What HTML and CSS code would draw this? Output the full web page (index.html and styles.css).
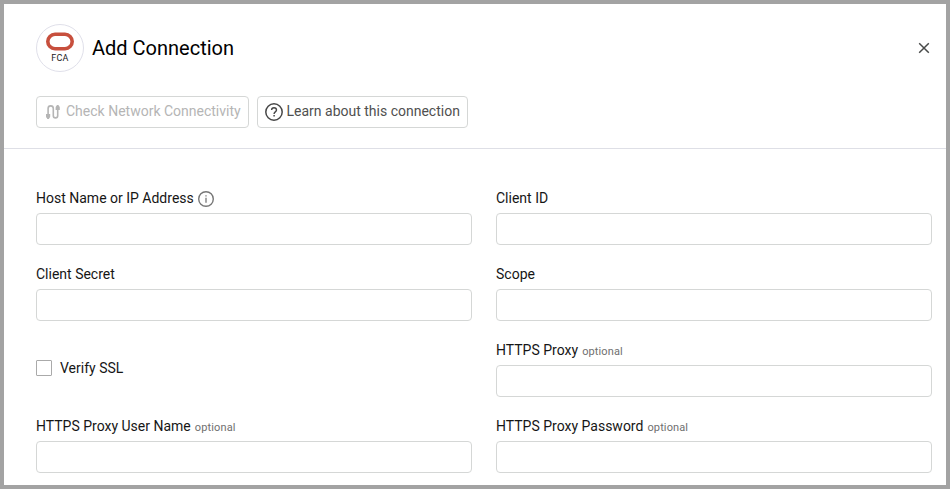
FILE: index.html
```html
<!DOCTYPE html>
<html lang="en">
<head>
<meta charset="utf-8">
<title>Add Connection</title>
<link rel="stylesheet" href="styles.css">
</head>
<body>
<main class="dialog">
  <header class="header">
    <div class="title-row">
      <div class="logo">
        <svg width="28" height="19" viewBox="0 0 28 19"><rect x="1.8" y="2.3" width="24.4" height="14.4" rx="7.2" fill="none" stroke="#c74f3d" stroke-width="3.6"/></svg>
        <span class="logo-text">FCA</span>
      </div>
      <h1 class="title">Add Connection</h1>
      <button class="close" aria-label="Close">
        <svg width="12" height="12" viewBox="0 0 12 12"><path d="M1.2 1.2l9.6 9.6M10.8 1.2l-9.6 9.6" fill="none" stroke="#484a49" stroke-width="1.5"/></svg>
      </button>
    </div>
    <div class="actions">
      <button class="btn btn-check" disabled>
        <svg width="14" height="14" viewBox="0 0 14 14"><path d="M2.100 10V3.500a2.600 2.600 0 0 1 5.200 0v7.200a2.200 2.200 0 0 0 4.400 0V4" fill="none" stroke="#b5b5b5" stroke-width="1.600"/><path d="M0 9h4.200v2.600a1.900 1.900 0 0 1-1.100 1.700v.7H1.100v-.7A1.900 1.900 0 0 1 0 11.600zM9.600 5V2.400A1.900 1.900 0 0 1 10.700.7V0h2v.7A1.900 1.900 0 0 1 13.800 2.400V5z" fill="#b5b5b5"/></svg>
        <span>Check Network Connectivity</span>
      </button>
      <button class="btn btn-learn">
        <svg width="18" height="18" viewBox="0 0 18 18" fill="none" stroke="#484848"><circle cx="9" cy="9" r="8.2" stroke-width="1.5"/><path d="M6.600 7.100C6.600 5.700 7.600 4.800 9 4.800s2.500.9 2.500 2.200c0 1.900-2.400 1.800-2.400 3.700v.3" stroke-width="1.4"/><path d="M9.100 12v1.500" stroke-width="1.500"/></svg>
        <span>Learn about this connection</span>
      </button>
    </div>
  </header>
  <form class="form">
    <div class="field">
      <label class="label" for="host">Host Name or IP Address</label>
      <svg class="info" width="16" height="16" viewBox="0 0 16 16" fill="none" stroke="#777"><circle cx="8" cy="8" r="7.300" stroke-width="1.400"/><path d="M8 4.200v1.400M8 6.800v5" stroke-width="1.300"/></svg>
      <input class="input" id="host">
    </div>
    <div class="field">
      <label class="label" for="client">Client ID</label>
      <input class="input" id="client">
    </div>
    <div class="field">
      <label class="label" for="secret">Client Secret</label>
      <input class="input" id="secret">
    </div>
    <div class="field">
      <label class="label" for="scope">Scope</label>
      <input class="input" id="scope">
    </div>
    <label class="check"><input class="checkbox" type="checkbox"><span>Verify SSL</span></label>
    <div class="field">
      <label class="label" for="proxy">HTTPS Proxy <small>optional</small></label>
      <input class="input" id="proxy">
    </div>
    <div class="field">
      <label class="label" for="user">HTTPS Proxy User Name <small>optional</small></label>
      <input class="input" id="user">
    </div>
    <div class="field">
      <label class="label" for="password">HTTPS Proxy Password <small>optional</small></label>
      <input class="input" id="password" type="password">
    </div>
  </form>
</main>
</body>
</html>
```

FILE: styles.css
```css
* { box-sizing: border-box; }
body { margin: 0; font: 14px/20px Roboto, "Liberation Sans", sans-serif; color: #161616; background: #fff; }
.dialog { width: 950px; height: 489px; border: 4px solid #a3a3a3; overflow: hidden; }
.header { height: 145px; padding: 20px 14px 0 32px; border-bottom: 1px solid #dedfe6; }
.title-row { display: flex; align-items: center; height: 48px; }
.logo { width: 48px; height: 48px; border: 1px solid #e0e0ea; border-radius: 50%; display: flex; flex-direction: column; align-items: center; padding-top: 7px; }
.logo svg { display: block; flex: none; }
.logo-text { margin-top: 1px; font-size: 9px; line-height: 12px; letter-spacing: .2px; color: #222; }
.title { margin: 0 0 0 8px; font-size: 20px; line-height: 28px; font-weight: 400; color: #000; }
.close { margin-left: auto; width: 16px; height: 16px; padding: 0; border: 0; background: none; display: flex; align-items: center; justify-content: center; }
.actions { display: flex; gap: 8px; margin-top: 24px; }
.btn { height: 32px; display: flex; align-items: center; border: 1px solid #d5d7d6; border-radius: 4px; background: #fff; font: inherit; color: #505050; white-space: nowrap; }
.btn span { margin-bottom: 2px; }
.btn-check { width: 213px; padding: 0 0 0 9px; gap: 6px; color: #b5b5b5; }
.btn-learn { width: 211px; padding: 0 0 0 7px; gap: 3.5px; }
.form { display: grid; grid-template-columns: 436px 436px; column-gap: 24px; row-gap: 19px; padding: 39px 0 0 32px; }
.field { display: flex; flex-wrap: wrap; align-items: center; column-gap: 4px; row-gap: 5px; height: 57px; align-content: flex-start; }
.label { height: 20px; white-space: nowrap; }
.label small { margin-left: .6px; font-size: 11px; letter-spacing: .12px; color: #6f6f6f; }
.info { position: relative; top: 1px; }
.input { width: 436px; height: 32px; padding: 0 8px; border: 1px solid #d5d7d6; border-radius: 4px; background: #fff; font: inherit; outline: none; }
.check { display: flex; align-items: center; gap: 8px; height: 57px; padding-bottom: 1px; }
.checkbox { appearance: none; width: 16px; height: 16px; margin: 0; border: 1px solid #aaa; border-radius: 1px; background: #fff; }
```
